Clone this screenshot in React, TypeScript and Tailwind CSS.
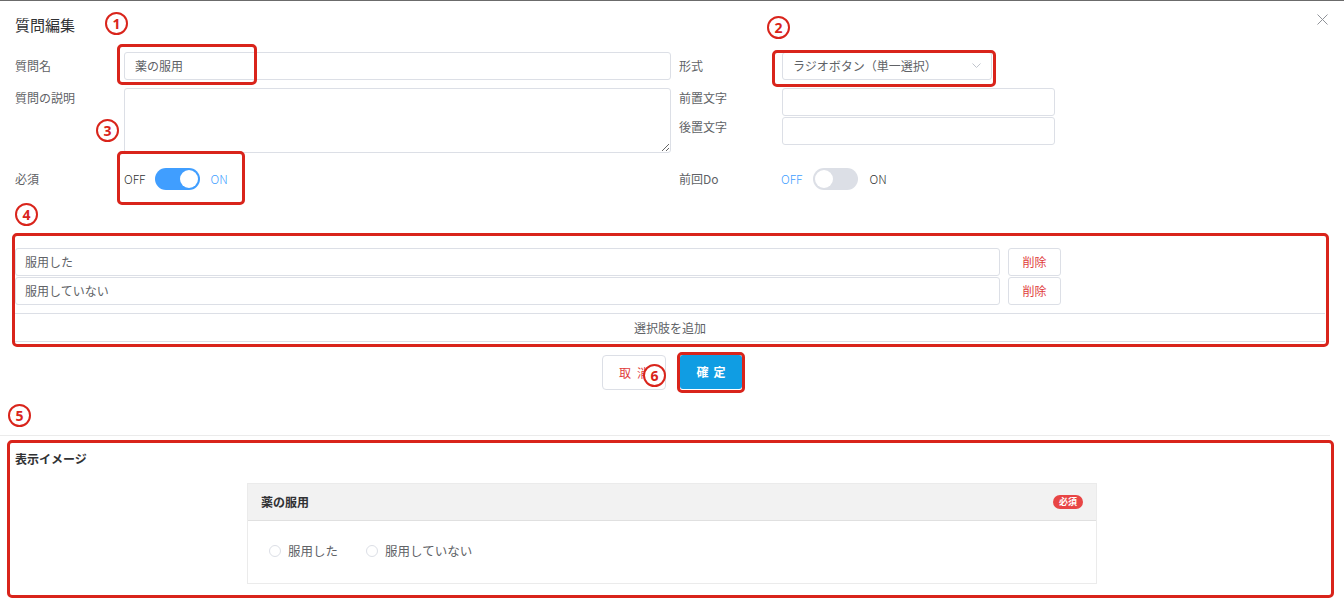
import React from "react";

const Circle = ({ n, className }: { n: string; className: string }) => (
  <div
    className={`absolute w-[23px] h-[23px] rounded-full border-2 border-[#d9241b] bg-white flex items-center justify-center text-[#d9241b] text-[14px] font-bold leading-none font-['Noto_Sans','Noto_Sans_CJK_JP',sans-serif] ${className}`}
  >
    {n}
  </div>
);

const RedBox = ({ className }: { className: string }) => (
  <div className={`absolute border-[3px] border-[#d9241b] rounded-[5px] pointer-events-none ${className}`} />
);

const Toggle = ({ on }: { on: boolean }) => (
  <div
    className={`w-[45px] h-[22px] rounded-full flex items-center px-[2px] ${
      on ? "bg-[#409eff] justify-end" : "bg-[#dcdfe6] justify-start"
    }`}
  >
    <div className="w-[18px] h-[18px] rounded-full bg-white" />
  </div>
);

export default function App() {
  return (
    <div className="relative w-[1344px] h-[609px] bg-white overflow-hidden border-t border-[#6b6b6b] font-['Noto_Sans_CJK_JP','Noto_Sans',sans-serif] text-[12px] text-[#606266]">
      {/* header */}
      <div className="flex items-center justify-between h-[49px] pl-[15px] pr-[16px]">
        <div className="text-[15px] text-[#303133]">質問編集</div>
        <svg width="11" height="11" viewBox="0 0 11 11" className="mb-[12px]">
          <path d="M0.5 0.5 L10.5 10.5 M10.5 0.5 L0.5 10.5" stroke="#909399" strokeWidth="1" />
        </svg>
      </div>

      {/* form */}
      <div className="pl-[15px] mt-[2px]">
        {/* row 1 */}
        <div className="flex items-center h-[28px]">
          <div className="w-[109px]">質問名</div>
          <div className="w-[547px] h-[28px] border border-[#dcdfe6] rounded-[3px] flex items-center pl-[10px]">薬の服用</div>
          <div className="ml-[8px] w-[103px]">形式</div>
          <div className="w-[210px] h-[28px] border border-[#dcdfe6] rounded-[3px] flex items-center justify-between pl-[10px] pr-[10px]">
            <span>ラジオボタン（単一選択）</span>
            <svg width="9" height="6" viewBox="0 0 9 6">
              <path d="M0.5 0.5 L4.5 4.5 L8.5 0.5" stroke="#c0c4cc" strokeWidth="1" fill="none" />
            </svg>
          </div>
        </div>

        {/* row 2 */}
        <div className="flex mt-[8px]">
          <div className="w-[109px] leading-[20px]">質問の説明</div>
          <textarea className="w-[547px] h-[65px] border border-[#dcdfe6] rounded-[3px] resize-y outline-none" />
          <div className="ml-[8px] w-[103px] flex flex-col">
            <div className="h-[29px] leading-[20px]">前置文字</div>
            <div className="h-[29px] leading-[20px]">後置文字</div>
          </div>
          <div className="flex flex-col gap-[1px]">
            <div className="w-[273px] h-[28px] border border-[#dcdfe6] rounded-[3px]" />
            <div className="w-[273px] h-[28px] border border-[#dcdfe6] rounded-[3px]" />
          </div>
        </div>

        {/* row 3 */}
        <div className="flex items-center h-[22px] mt-[15px]">
          <div className="w-[109px]">必須</div>
          <div className="w-[547px] flex items-center gap-[10px]">
            <span className="text-[#303133] font-light">OFF</span>
            <Toggle on={true} />
            <span className="text-[#409eff] font-light">ON</span>
          </div>
          <div className="ml-[8px] w-[102px]">前回Do</div>
          <div className="flex items-center gap-[11px]">
            <span className="text-[#409eff] font-light">OFF</span>
            <Toggle on={false} />
            <span className="text-[#303133] font-light">ON</span>
          </div>
        </div>

        {/* options */}
        <div className="mt-[58px] w-[1310px] flex flex-col">
          <div className="flex flex-col gap-[1px]">
            {["服用した", "服用していない"].map((t) => (
              <div key={t} className="flex items-center gap-[8px]">
                <div className="w-[985px] h-[28px] border border-[#dcdfe6] rounded-[3px] flex items-center pl-[9px]">{t}</div>
                <div className="w-[53px] h-[28px] border border-[#dcdfe6] rounded-[3px] flex items-center justify-center text-[#e03b3b]">削除</div>
              </div>
            ))}
          </div>
          <div className="mt-[8px] h-[29px] border-t border-b border-[#dcdfe6] flex items-center justify-center">選択肢を追加</div>
        </div>
      </div>

      {/* buttons */}
      <div className="flex justify-center gap-[14px] mt-[13px]">
        <div className="w-[64px] h-[35px] border border-[#dcdfe6] rounded-[4px] flex items-center justify-center text-[#e03b3b] tracking-[6px] pl-[6px]">取消</div>
        <div className="w-[62px] h-[34px] bg-[#109de3] rounded-[3px] flex items-center justify-center text-white font-bold tracking-[5px] pl-[5px]">確定</div>
      </div>

      {/* preview */}
      <div className="mt-[45px] w-[1330px] border-t border-[#ebebeb]">
        <div className="pl-[15px] pt-[15px] font-bold text-[#303133] leading-[16px]">表示イメージ</div>
        <div className="mt-[16px] ml-[247px] w-[850px] border border-[#ebebeb]">
          <div className="h-[37px] bg-[#f2f2f2] border-b border-[#e0e0e0] flex items-center justify-between pl-[13px] pr-[13px]">
            <span className="font-bold text-[#303133]">薬の服用</span>
            <span className="h-[14px] px-[6px] rounded-full bg-[#e84545] text-white text-[9px] font-bold leading-[14px]">必須</span>
          </div>
          <div className="h-[62px] flex items-center pl-[21px] pb-[2px] gap-[28px] text-[#606266] text-[12.5px]">
            <div className="flex items-center gap-[7px]">
              <span className="w-[12px] h-[12px] rounded-full border border-[#dcdfe6]" />
              <span>服用した</span>
            </div>
            <div className="flex items-center gap-[7px]">
              <span className="w-[12px] h-[12px] rounded-full border border-[#dcdfe6]" />
              <span>服用していない</span>
            </div>
          </div>
        </div>
      </div>

      {/* annotations */}
      <RedBox className="left-[117px] top-[43px] w-[140px] h-[41px]" />
      <RedBox className="left-[772px] top-[49px] w-[224px] h-[37px]" />
      <RedBox className="left-[117px] top-[150px] w-[128px] h-[54px]" />
      <RedBox className="left-[12px] top-[232px] w-[1317px] h-[114px]" />
      <RedBox className="left-[677px] top-[351px] w-[68px] h-[41px]" />
      <RedBox className="left-[7px] top-[439px] w-[1327px] h-[158px]" />

      <Circle n="1" className="left-[105px] top-[11px]" />
      <Circle n="2" className="left-[767px] top-[15px]" />
      <Circle n="3" className="left-[96px] top-[118px]" />
      <Circle n="4" className="left-[15px] top-[202px]" />
      <Circle n="5" className="left-[8px] top-[403px]" />
      <Circle n="6" className="left-[643px] top-[363px]" />
    </div>
  );
}
